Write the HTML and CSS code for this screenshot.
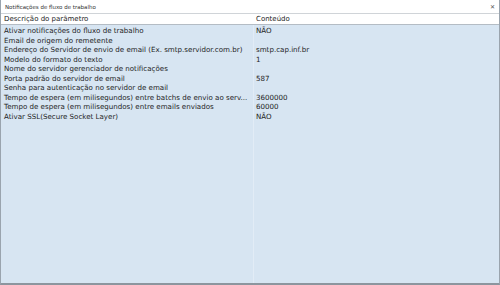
FILE: index.html
```html
<!DOCTYPE html>
<html lang="pt-BR">
<head>
  <meta charset="UTF-8">
  <title>Notificações de fluxo de trabalho</title>
  <link rel="stylesheet" href="styles.css">
</head>
<body>
  <div class="window">
    <div class="titlebar">
      <span class="title">Notificações de fluxo de trabalho</span>
      <span class="close">&#x2715;</span>
    </div>

    <div class="grid-head">
      <div class="col-desc">Descrição do parâmetro</div>
      <div class="col-val">Conteúdo</div>
    </div>

    <div class="grid-body">
      <div class="row"><div class="col-desc">Ativar notificações do fluxo de trabalho</div><div class="col-val">NÃO</div></div>
      <div class="row"><div class="col-desc">Email de origem do remetente</div><div class="col-val"></div></div>
      <div class="row"><div class="col-desc">Endereço do Servidor de envio de email (Ex. smtp.servidor.com.br)</div><div class="col-val">smtp.cap.inf.br</div></div>
      <div class="row"><div class="col-desc">Modelo do formato do texto</div><div class="col-val">1</div></div>
      <div class="row"><div class="col-desc">Nome do servidor gerenciador de notificações</div><div class="col-val"></div></div>
      <div class="row"><div class="col-desc">Porta padrão do servidor de email</div><div class="col-val">587</div></div>
      <div class="row"><div class="col-desc">Senha para autenticação no servidor de email</div><div class="col-val"></div></div>
      <div class="row"><div class="col-desc">Tempo de espera (em milisegundos) entre batchs de envio ao serv...</div><div class="col-val">3600000</div></div>
      <div class="row"><div class="col-desc">Tempo de espera (em milisegundos) entre emails enviados</div><div class="col-val">60000</div></div>
      <div class="row"><div class="col-desc">Ativar SSL(Secure Socket Layer)</div><div class="col-val">NÃO</div></div>
    </div>
  </div>
</body>
</html>
```

FILE: styles.css
```css
html, body {
  margin: 0;
  height: 100%;
  background: #ffffff;
}

body {
  font-family: "DejaVu Sans", Verdana, sans-serif;
  color: #1e1e1e;
}

.window {
  height: 285px;
  box-sizing: border-box;
  display: flex;
  flex-direction: column;
  border-left: 1px solid #9aa4ae;
  border-right: 1px solid #9aa4ae;
  border-bottom: 2px solid #8c959e;
}

.titlebar {
  height: 13px;
  display: flex;
  align-items: center;
  justify-content: space-between;
  padding: 0 4px 0 4px;
  border-bottom: 1px solid #d0d4d8;
}

.title {
  font-size: 5.5px;
  color: #333;
}

.close {
  font-size: 6px;
  color: #555;
}

.grid-head {
  height: 10px;
  display: flex;
  align-items: center;
  font-size: 7px;
  border-bottom: 1px solid #b4bcc4;
  background: #ffffff;
}

.col-desc {
  width: 248px;
  padding-left: 3px;
  white-space: nowrap;
  overflow: hidden;
}

.col-val {
  flex: 1;
  padding-left: 4px;
  white-space: nowrap;
}

.grid-body {
  flex: 1;
  background: #d7e5f2;
  padding-top: 1px;
  background-image: linear-gradient(to right, transparent 252px, #e2ecf6 252px, #e2ecf6 253px, transparent 253px);
}

.row {
  display: flex;
  height: 9.55px;
  line-height: 9.55px;
  font-size: 7.1px;
}
```
